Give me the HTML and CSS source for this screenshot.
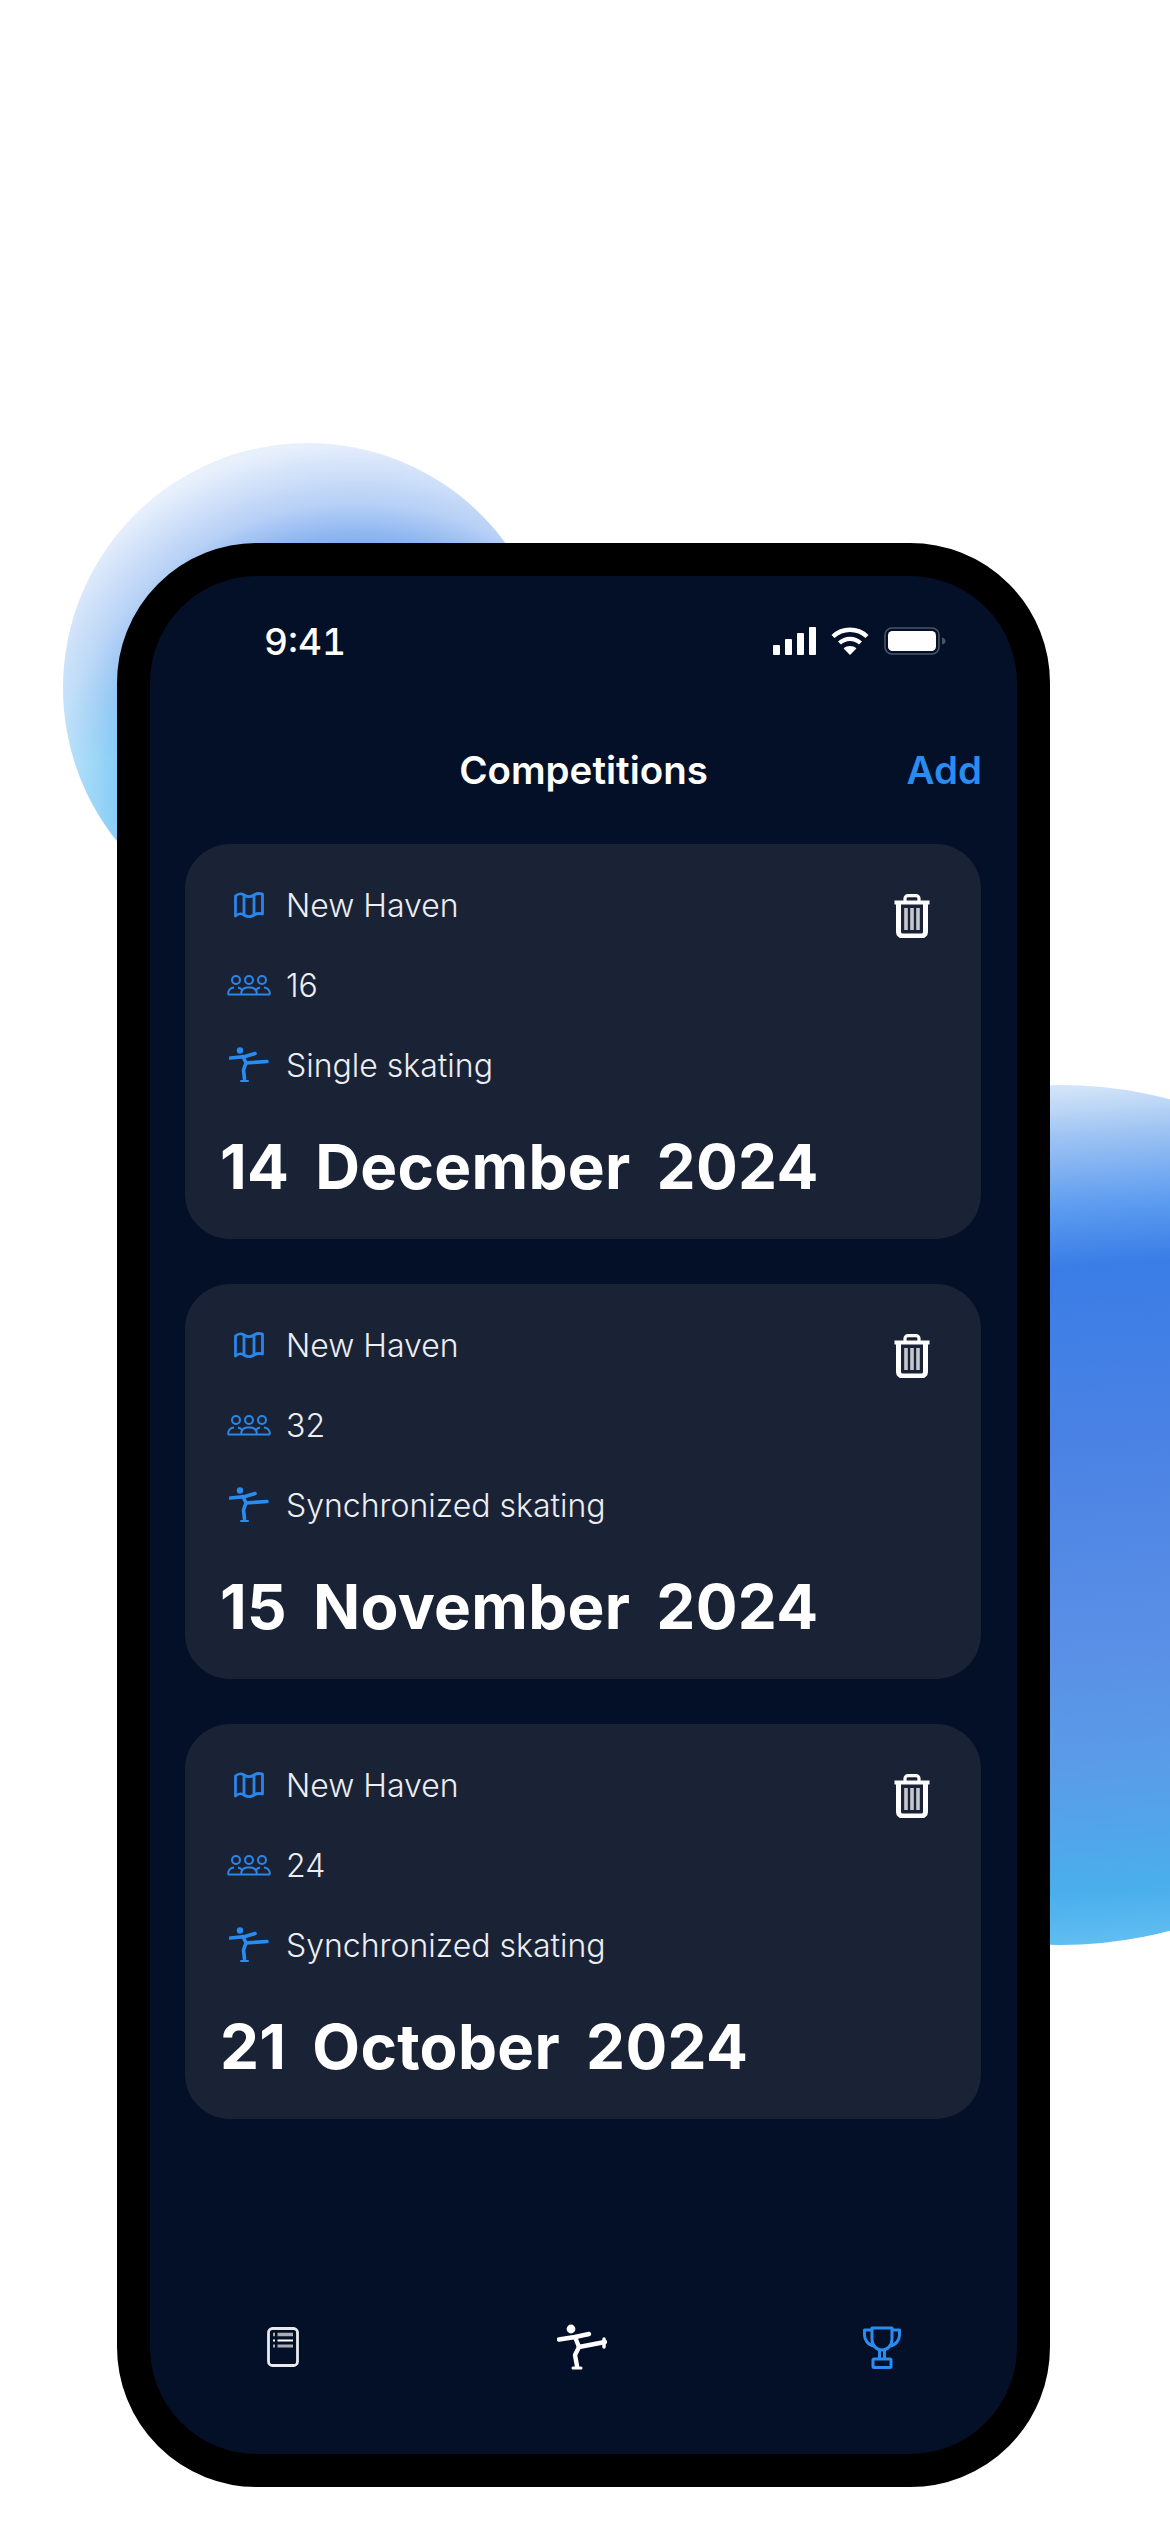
FILE: index.html
```html
<!DOCTYPE html>
<html lang="en">
<head>
    <meta charset="UTF-8">
    <title>Competitions</title>
    <link rel="stylesheet" href="styles.css">
</head>
<body>
    <!-- Shared card icons -->
    <svg class="sprite">
        <symbol id="icon-map" viewBox="0 0 30 28">
            <g fill="none" stroke="#2a86e8" stroke-width="2.800" stroke-linejoin="round">
                <path d="M1.500 5C5 2 7 2 10 4C13 6 17 6 20 4C23 2 25 2 28.500 3V23C25 22 23 22 20 24C17 26 13 26 10 24C7 22 5 22 1.500 25Z"/>
                <path d="M10 4V24M20 4V24"/>
            </g>
        </symbol>
        <symbol id="icon-group" viewBox="0 0 44 22">
            <g fill="none" stroke="#2a86e8" stroke-width="2">
                <circle cx="9" cy="6" r="4"/><circle cx="22" cy="6" r="4"/><circle cx="35" cy="6" r="4"/>
                <path d="M1 20.500C1 16 3 14 7 13.500M11 13.500C13 13.800 14 14.500 15 16M1 20.500H43M14 20.500C14 16 17 13.500 20 13.500H24C27 13.500 30 16 30 20.500M43 20.500C43 16 41 14 37 13.500M33 13.500C31 13.800 30 14.500 29 16"/>
            </g>
        </symbol>
        <symbol id="icon-skater" viewBox="0 0 40 36">
            <g fill="none" stroke="#2a8cf0" stroke-width="3.600" stroke-linecap="round" stroke-linejoin="round">
                <circle cx="11" cy="3.500" r="3.200" fill="#2a8cf0" stroke="none"/>
                <path d="M1.500 11L16 9.500L26 6.500"/>
                <path d="M14 9.500L17 16L38 14.500"/>
                <path d="M17 16L14.500 23L15.500 32"/>
                <path d="M12 34H19" stroke-width="2"/>
            </g>
        </symbol>
        <symbol id="icon-trash" viewBox="0 0 36 44">
            <g fill="none" stroke="#fff" stroke-linejoin="round">
                <path d="M11 8V4.500C11 2.800 12.500 1.600 14 1.600H22C23.500 1.600 25 2.800 25 4.500V8" stroke-width="3.200"/>
                <path d="M0.500 8.500H35.500" stroke-width="3.800"/>
                <path d="M4.500 9V38C4.500 40.500 6.500 42 9 42H27C29.500 42 31.500 40.500 31.500 38V9" stroke-width="5"/>
                <path d="M12 14V36M18 14V36M24 14V36" stroke-width="3.600" stroke="#c4c7ce"/>
            </g>
        </symbol>
    </svg>

    <div class="page">
        <!-- Background circles -->
        <div class="circle circle-left"></div>
        <div class="circle circle-right"></div>

        <div class="phone">
            <div class="screen">
                <div class="status-bar">
                    <span class="time">9:41</span>
                    <div class="status-icons">
                        <svg width="43" height="28" viewBox="0 0 43 28" fill="#fff"><rect x="0" y="18" width="7" height="10" rx="1"/><rect x="12" y="12" width="7" height="16" rx="1"/><rect x="24" y="6" width="7" height="22" rx="1"/><rect x="36" y="0" width="7" height="28" rx="1"/></svg>
                        <svg width="38" height="28" viewBox="0 0 38 28" fill="none" stroke="#fff" stroke-width="4.400"><path d="M2 9.500C11.500 0.500 26.500 0.500 36 9.500"/><path d="M8.500 16C14.500 10.500 23.500 10.500 29.500 16"/><path d="M19 28L12.600 21.400C16 18.200 22 18.200 25.400 21.400Z" fill="#fff" stroke="none"/></svg>
                        <svg width="62" height="28" viewBox="0 0 62 28"><rect x="1" y="1" width="54" height="26" rx="7" fill="none" stroke="#4a5468" stroke-width="1.600"/><rect x="4" y="4" width="48" height="20" rx="4.500" fill="#fff"/><path d="M58 10.500C60.500 11 61.500 12.500 61.500 14C61.500 15.500 60.500 17 58 17.500Z" fill="#4a5468"/></svg>
                    </div>
                </div>

                <div class="header">
                    <h1>Competitions</h1>
                    <span class="add-btn">Add</span>
                </div>

                <div class="card-list">
                    <div class="card">
                        <div class="card-top">
                            <div class="info">
                                <div class="info-row">
                                    <span class="info-icon"><svg width="30" height="28"><use href="#icon-map"/></svg></span>
                                    <span>New Haven</span>
                                </div>
                                <div class="info-row">
                                    <span class="info-icon"><svg width="44" height="22"><use href="#icon-group"/></svg></span>
                                    <span>16</span>
                                </div>
                                <div class="info-row">
                                    <span class="info-icon"><svg width="40" height="36"><use href="#icon-skater"/></svg></span>
                                    <span>Single skating</span>
                                </div>
                            </div>
                            <svg class="trash" width="36" height="44"><use href="#icon-trash"/></svg>
                        </div>
                        <div class="card-date">14 December 2024</div>
                    </div>

                    <div class="card">
                        <div class="card-top">
                            <div class="info">
                                <div class="info-row">
                                    <span class="info-icon"><svg width="30" height="28"><use href="#icon-map"/></svg></span>
                                    <span>New Haven</span>
                                </div>
                                <div class="info-row">
                                    <span class="info-icon"><svg width="44" height="22"><use href="#icon-group"/></svg></span>
                                    <span>32</span>
                                </div>
                                <div class="info-row">
                                    <span class="info-icon"><svg width="40" height="36"><use href="#icon-skater"/></svg></span>
                                    <span>Synchronized skating</span>
                                </div>
                            </div>
                            <svg class="trash" width="36" height="44"><use href="#icon-trash"/></svg>
                        </div>
                        <div class="card-date">15 November 2024</div>
                    </div>

                    <div class="card">
                        <div class="card-top">
                            <div class="info">
                                <div class="info-row">
                                    <span class="info-icon"><svg width="30" height="28"><use href="#icon-map"/></svg></span>
                                    <span>New Haven</span>
                                </div>
                                <div class="info-row">
                                    <span class="info-icon"><svg width="44" height="22"><use href="#icon-group"/></svg></span>
                                    <span>24</span>
                                </div>
                                <div class="info-row">
                                    <span class="info-icon"><svg width="40" height="36"><use href="#icon-skater"/></svg></span>
                                    <span>Synchronized skating</span>
                                </div>
                            </div>
                            <svg class="trash" width="36" height="44"><use href="#icon-trash"/></svg>
                        </div>
                        <div class="card-date">21 October 2024</div>
                    </div>
                </div>

                <!-- Bottom tabs -->
                <div class="tab-bar">
                    <svg width="32" height="40" viewBox="0 0 32 40" fill="none"><rect x="1.500" y="1.500" width="29" height="37" rx="4" stroke="#e8eaee" stroke-width="2.800"/><path d="M6 7.500H8M10.500 7.500H26" stroke="#a9adb5" stroke-width="3.400"/><path d="M6 13.500H8M10.500 13.500H26" stroke="#fff" stroke-width="2"/><path d="M6 19H8M10.500 19H26" stroke="#a9adb5" stroke-width="3"/></svg>
                    <svg class="tab-skater" width="52" height="46" viewBox="0 0 52 46" fill="none" stroke="#fff" stroke-width="4.400" stroke-linecap="round" stroke-linejoin="round"><circle cx="14" cy="5" r="4.400" fill="#fff" stroke="none"/><path d="M2 15.500L18 13L32 10"/><path d="M18 13L22 23L48 18"/><path d="M47 15V23" stroke-width="3.500"/><path d="M22 23L18 31L20 42"/><path d="M16 44H24" stroke-width="3"/></svg>
                    <svg width="38" height="44" viewBox="0 0 38 44" fill="none" stroke="#2a8cf0" stroke-width="3" stroke-linejoin="round"><path d="M9 3H29V14C29 21 24 25 19 25C14 25 9 21 9 14Z"/><path d="M9 5H1.500V10C1.500 15 5 20 11 21M29 5H36.500V10C36.500 15 33 20 27 21"/><path d="M16.500 25V34M21.500 25V34"/><rect x="10" y="34" width="18" height="8.500" rx="1"/></svg>
                </div>
            </div>
        </div>
    </div>
</body>
</html>
```

FILE: styles.css
```css
/* General Page Styling */
body {
    font-family: Inter, "Liberation Sans", sans-serif;
    background: #ffffff;
    color: #ffffff;
    margin: 0;
}

.sprite {
    display: none;
}

.page {
    position: relative;
    width: 1170px;
    height: 2532px;
    box-sizing: border-box;
    padding: 543px 0 0 117px;
    overflow: hidden;
}

/* Background Circles */
.circle {
    position: absolute;
    border-radius: 50%;
}

.circle-left {
    left: 63px;
    top: 443px;
    width: 490px;
    height: 490px;
    background:
        radial-gradient(circle 370px at 60% 75%, rgba(255, 255, 255, 0) 54%, rgba(255, 255, 255, 0.4) 72%, rgba(255, 255, 255, 0.65) 83%, rgba(255, 255, 255, 0.89) 100%),
        linear-gradient(180deg, #2f78e6 20%, #3f8ce8 40%, #5cbcf2 65%, #6cc4f2 100%);
}

.circle-right {
    left: 630px;
    top: 1085px;
    width: 860px;
    height: 860px;
    background: linear-gradient(176deg, #e6f1fb 0%, #cfe2f8 4%, #9dc3f3 9%, #5a9af0 17%, #3a7de6 23%, #4a82e4 42%, #5a90e6 65%, #5a9ce8 78%, #4aaeec 91%, #6cc6f4 100%);
}

/* Phone Frame */
.phone {
    position: relative;
    width: 933px;
    height: 1944px;
    box-sizing: border-box;
    border: 33px solid #000000;
    border-radius: 140px;
    background: #041027;
    overflow: hidden;
}

.screen {
    height: 100%;
    display: flex;
    flex-direction: column;
}

/* Status Bar */
.status-bar {
    display: flex;
    justify-content: space-between;
    align-items: center;
    height: 28px;
    padding: 51px 71px 0 114px;
}

.time {
    font-size: 37px;
    font-weight: 500;
    font-variant-numeric: tabular-nums;
}

.status-icons {
    display: flex;
    align-items: center;
    gap: 15px;
}

.status-icons svg {
    display: block;
}

/* Title */
.header {
    position: relative;
    display: flex;
    justify-content: center;
    align-items: center;
    height: 60px;
    margin-top: 85px;
}

h1 {
    margin: 0;
    font-size: 38.5px;
    font-weight: 600;
}

.add-btn {
    position: absolute;
    right: 35px;
    font-size: 38.5px;
    font-weight: 600;
    color: #2a8cf0;
}

/* Competition Cards */
.card-list {
    display: flex;
    flex-direction: column;
    gap: 45px;
    margin: 44px 36px 0 35px;
}

.card {
    height: 395px;
    box-sizing: border-box;
    padding: 21px 51px 0 35px;
    background: #1a2336;
    border-radius: 45px;
}

.card-top {
    display: flex;
    justify-content: space-between;
    align-items: flex-start;
}

.info-row {
    display: flex;
    align-items: center;
    height: 80px;
    font-size: 32px;
    font-weight: 300;
    color: #eceef1;
}

.info-icon {
    width: 57px;
    margin-right: 9px;
    display: flex;
    justify-content: center;
}

.info-icon svg {
    display: block;
}

.trash {
    display: block;
    margin-top: 29px;
}

.card-date {
    margin-top: 26px;
    font-size: 62px;
    font-weight: 700;
    line-height: 72px;
    letter-spacing: 0.3px;
    word-spacing: 11px;
}

/* Bottom Tabs */
.tab-bar {
    display: flex;
    justify-content: space-between;
    align-items: center;
    margin-top: auto;
    padding: 0 116px 84px 117px;
}

.tab-bar svg {
    display: block;
}

.tab-skater {
    margin-left: 4px;
}
```
